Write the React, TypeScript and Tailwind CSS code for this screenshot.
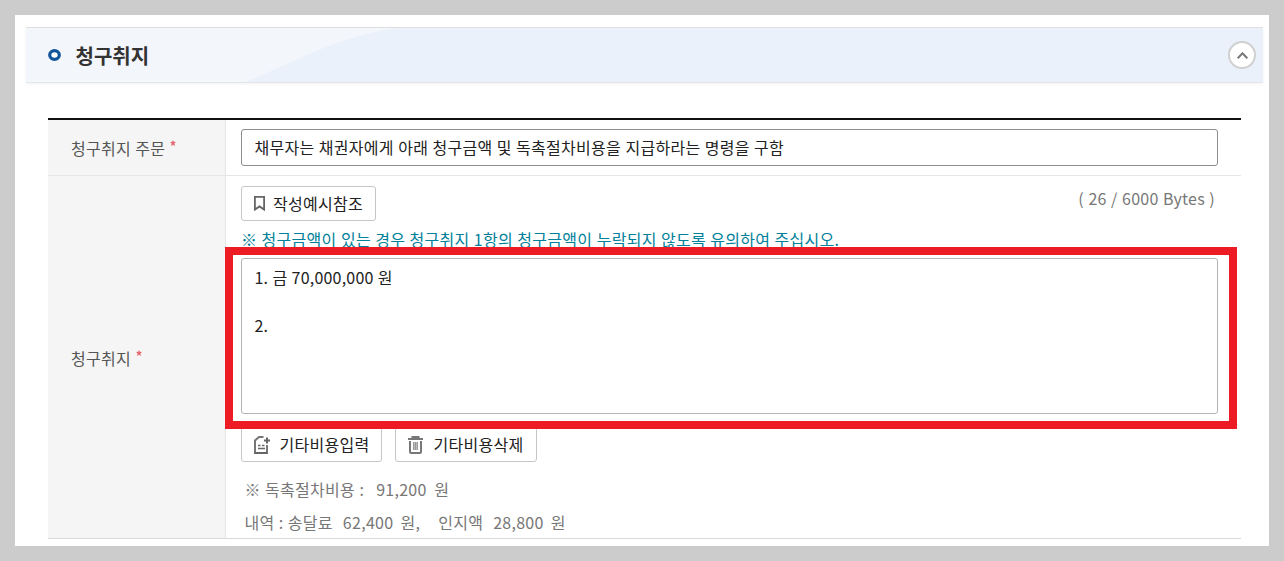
import type { ReactNode } from 'react';
import { clsx } from 'clsx';

function BookmarkIcon() {
  return (
    <svg className="h-[15px] w-[11px] shrink-0" viewBox="0 0 11 15" fill="none" stroke="#666" strokeWidth="1.8">
      <path d="M0.9 0.9h9.2v12.7L5.5 10.4 0.9 13.6z" />
    </svg>
  );
}

function AddCostIcon() {
  return (
    <svg className="h-[18px] w-[17px] shrink-0" viewBox="0 0 17 18" fill="none" stroke="#666" strokeWidth="2">
      <path d="M9.5 1H5L1 4.5V17h12V9" stroke="#777" />
      <path d="M0.5 17H13.5" />
      <path d="M13 1.5v6M10 4.5h6" />
      <path d="M4 9.5h2.5M8 9.5h2.5M4 12.5h7" strokeWidth="1.6" />
    </svg>
  );
}

function TrashIcon() {
  return (
    <svg className="h-[18px] w-[15px] shrink-0" viewBox="0 0 15 18" fill="none" stroke="#777" strokeWidth="2">
      <path d="M0 3h15M4.5 3V1h6v2" />
      <path d="M2 5v11c0 .7.3 1 1 1h9c.7 0 1-.3 1-1V5" />
      <path d="M5 6h5v8H5z" fill="#bbb" stroke="none" />
      <path d="M5.5 6v8M7.5 6v8M9.5 6v8" stroke="#999" strokeWidth="1" />
    </svg>
  );
}

function ActionButton({ icon, className, children }: { icon: ReactNode; className?: string; children: ReactNode }) {
  return (
    <button
      type="button"
      className={clsx('flex h-[35px] items-center rounded-[3px] border border-[#c6c6c6] bg-white text-[#222]', className)}
    >
      {icon}
      <span className="pb-0.5 whitespace-nowrap">{children}</span>
    </button>
  );
}

function RequiredMark() {
  return (
    <svg className="-mt-2.5 ml-[5px] size-1.5" viewBox="0 0 6 6" fill="#e4686f">
      <path d="M3 0l.8 1.8 2.2.2-1.6 1.4L5 6 3 4.7 1 6l.6-2.6L0 2l2.2-.2z" />
    </svg>
  );
}

function FieldLabel({ className, children }: { className?: string; children: ReactNode }) {
  return (
    <div
      className={clsx('flex w-[178px] shrink-0 items-center border-r border-[#e6e6e6] bg-[#f5f5f5] pl-[23px] text-[#555]', className)}
    >
      <span>{children}</span>
      <RequiredMark />
    </div>
  );
}

function SectionHeader() {
  return (
    <header className="relative flex h-14 items-center border-t border-b border-t-[#dcdee0] border-b-[#e4e6e9] bg-[#f3f6fb] pr-[7px] pl-[22px] shadow-[0_1px_3px_rgba(0,0,0,0.06)]">
      <svg className="absolute inset-0 h-full w-full" viewBox="0 0 1237 54" preserveAspectRatio="none">
        <path d="M220 54C268 34 308 10 370 0H1237V54z" fill="#eaf1fa" />
      </svg>
      <svg className="relative h-3 w-[13px]" viewBox="0 0 13 12">
        <ellipse cx="6.5" cy="6" rx="4.8" ry="4.4" fill="#fff" stroke="#10549b" strokeWidth="3.2" />
      </svg>
      <h2 className="relative ml-[14.5px] pt-px text-xl font-semibold tracking-normal text-[#333]">청구취지</h2>
      <button
        type="button"
        aria-label="접기"
        className="relative ml-auto flex size-7 items-center justify-center rounded-full border-2 border-[#d0d0d0] bg-white"
      >
        <svg className="h-[7px] w-[11px]" viewBox="0 0 11 7" fill="none" stroke="#777" strokeWidth="2">
          <path d="M0.7 6.2L5.5 1.3l4.8 4.9" />
        </svg>
      </button>
    </header>
  );
}

export default function App() {
  return (
    <div className="h-[561px] w-[1284px] bg-[#ccc] p-[15px] font-['Noto_Sans_CJK_KR',sans-serif] text-base leading-6 tracking-[0.28px] text-[#222] [word-spacing:0.45px]">
      <main className="h-[531px] w-[1254px] bg-white pt-3 pr-1.5 pl-[11px]">
        <SectionHeader />

        <section className="mt-[35px] mr-[22px] ml-[22px] border-t-2 border-b border-t-[#111] border-b-[#d9d9d9]">
          <div className="flex h-14 border-b border-[#e6e6e6]">
            <FieldLabel>청구취지 주문</FieldLabel>
            <div className="flex-1 pt-[9px] pr-[23px] pl-[15px]">
              <div className="flex h-[37px] items-center rounded-[3px] border border-[#8e8e8e] px-[12.5px] pb-0.5">
                채무자는 채권자에게 아래 청구금액 및 독촉절차비용을 지급하라는 명령을 구함
              </div>
            </div>
          </div>

          <div className="flex h-[362px]">
            <FieldLabel className="pt-0.5">청구취지</FieldLabel>
            <div className="relative flex-1 pt-2.5 pr-[23px] pl-[15px]">
              <div className="flex items-start justify-between">
                <ActionButton className="w-[135px] gap-2 pl-3" icon={<BookmarkIcon />}>
                  작성예시참조
                </ActionButton>
                <span className="mr-[3px] tracking-[0.22px] text-[#777] [word-spacing:0.7px]">( 26 / 6000 Bytes )</span>
              </div>
              <p className="mt-1.5 text-[#00809a]">
                ※ 청구금액이 있는 경우 청구취지 1항의 청구금액이 누락되지 않도록 유의하여 주십시오.
              </p>
              <div className="mt-[7px] h-[156px] rounded-[3px] border border-[#b4b4b4] px-[12.5px] pt-1.5 tracking-[0.2px] whitespace-pre-line">
                {'1. 금 70,000,000 원\n\n2.'}
              </div>
              <div className="mt-[13px] flex gap-[13px]">
                <ActionButton className="w-[141px] gap-[8.5px] pl-3" icon={<AddCostIcon />}>
                  기타비용입력
                </ActionButton>
                <ActionButton className="w-[142px] gap-[10.5px] pl-3" icon={<TrashIcon />}>
                  기타비용삭제
                </ActionButton>
              </div>
              <div className="mt-[15px] space-y-[9px] pl-[3.5px] whitespace-pre text-[#777]">
                <p>
                  ※ 독촉절차비용 :<span className="mr-[7.5px] ml-3">91,200</span>원
                </p>
                <p>
                  내역 : 송달료<span className="mr-[7px] ml-2.5">62,400</span>원,
                  <span className="ml-[18px]">인지액</span>
                  <span className="mr-[7px] ml-2.5">28,800</span>원
                </p>
              </div>

              {/* highlight frame over the text area */}
              <div className="pointer-events-none absolute top-[71px] right-1 -left-px h-[182px] border-8 border-[#ed1c24]" />
            </div>
          </div>
        </section>
      </main>
    </div>
  );
}
